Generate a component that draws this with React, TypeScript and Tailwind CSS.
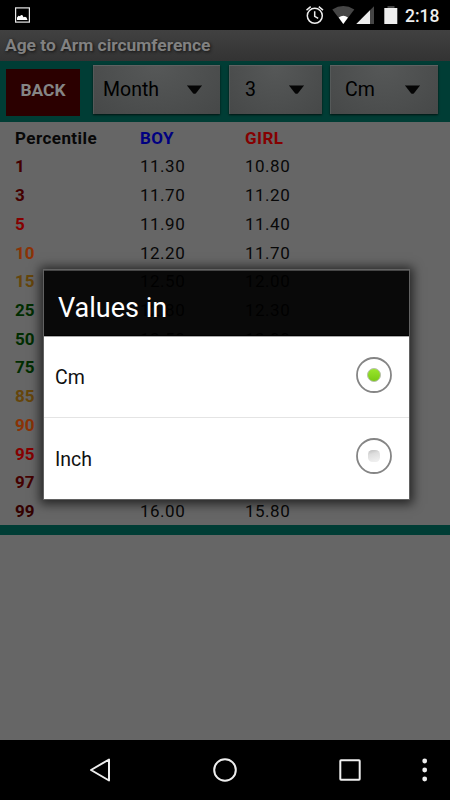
import React from "react";

type Row = { p: string; boy: string; girl: string; color: string };

const rows: Row[] = [
  { p: "1", boy: "11.30", girl: "10.80", color: "text-[#440000]" },
  { p: "3", boy: "11.70", girl: "11.20", color: "text-[#440000]" },
  { p: "5", boy: "11.90", girl: "11.40", color: "text-[#850000]" },
  { p: "10", boy: "12.20", girl: "11.70", color: "text-[#8a3205]" },
  { p: "15", boy: "12.50", girl: "12.00", color: "text-[#65450b]" },
  { p: "25", boy: "12.80", girl: "12.30", color: "text-[#002d00]" },
  { p: "50", boy: "13.50", girl: "13.00", color: "text-[#002d00]" },
  { p: "75", boy: "14.20", girl: "13.80", color: "text-[#002d00]" },
  { p: "85", boy: "14.60", girl: "14.20", color: "text-[#65450b]" },
  { p: "90", boy: "14.90", girl: "14.50", color: "text-[#8a3205]" },
  { p: "95", boy: "15.30", girl: "15.00", color: "text-[#850000]" },
  { p: "97", boy: "15.60", girl: "15.30", color: "text-[#440000]" },
  { p: "99", boy: "16.00", girl: "15.80", color: "text-[#330000]" },
];

function StatusBar() {
  return (
    <div className="flex h-[30px] items-center bg-black">
      <svg className="ml-[15px]" width="15" height="16" viewBox="0 0 15 16">
        <rect x=".6" y=".9" width="13.8" height="14.2" fill="none" stroke="#e8e8e8" strokeWidth="1.2" />
        <path d="M2 13V10.5l1.5-1.8 1.5.6 1-1.3 1.5.3 1 2 1.5-.6 1.5.8 1 2.5z" fill="#fff" />
      </svg>
      <svg className="ml-auto" width="100" height="30" viewBox="0 0 100 30">
        <g fill="none" stroke="#eee" strokeWidth="1.5">
          <circle cx="14.8" cy="15.8" r="7.5" />
          <path d="M14.7 11.3v5l3.5 2M6.5 10.2l4.2-3.5M23 10.2l-4.2-3.5" />
        </g>
        <path d="M32.3 9.4Q43.3 2.6 54.3 9.4L43.3 24z" fill="#464646" />
        <path d="M38.7 17.6Q43.3 14 48 17.6L43.3 24z" fill="#fff" />
        <path d="M56.3 24L74 6.3V24z" fill="#464646" />
        <path d="M56.3 24L70 10.3V24z" fill="#eee" />
        <path d="M87.5 6h7v4h-7z" fill="#464646" />
        <path d="M84.3 8h13v16h-13z" fill="#eee" />
      </svg>
      <span className="ml-[5px] w-[45px] pt-px text-[17.5px] font-medium leading-[30px] text-[#eee]">2:18</span>
    </div>
  );
}

function Spinner({ label, className }: { label: string; className: string }) {
  return (
    <div className={`flex h-[49px] items-center justify-between bg-[radial-gradient(ellipse_at_top,#565858,#464848)] text-[19.5px] text-black shadow-[0_1px_2px_rgba(0,0,0,.7),inset_0_1px_0_#5e6262,inset_1px_0_0_#555959] ${className}`}>
      <span>{label}</span>
      <svg width="15" height="9" viewBox="0 0 15 9">
        <path d="M0 .5h15L9 8.2q-1.5 1.2-3 0z" fill="#050505" />
        <path d="M0 .5h15" stroke="#292a2a" />
      </svg>
    </div>
  );
}

function Radio({ checked }: { checked: boolean }) {
  return (
    <svg width="38" height="38" viewBox="0 0 38 38">
      <defs>
        <linearGradient id="green" x2="0" y2="1">
          <stop stopColor="#9be72d" />
          <stop offset="1" stopColor="#79c914" />
        </linearGradient>
        <linearGradient id="off" x2=".3" y2="1">
          <stop stopColor="#bbb" />
          <stop offset=".4" stopColor="#ddd" />
          <stop offset="1" stopColor="#eee" />
        </linearGradient>
      </defs>
      <circle cx="19" cy="19" r="17" fill="#fff" stroke="#858585" strokeWidth="1.8" />
      {checked ? (
        <circle cx="19" cy="19" r="6.5" fill="url(#green)" stroke="#b9bfb0" strokeWidth="1" />
      ) : (
        <rect x="13" y="13" width="12" height="12" rx="4.5" fill="url(#off)" />
      )}
    </svg>
  );
}

function Dialog() {
  return (
    <div className="absolute left-[43px] top-[269px] w-[367px] border border-[#626262] shadow-[0_1px_10px_3px_rgba(0,0,0,.65)]">
      <div className="h-[66px] border-b border-t border-b-black border-t-[#454545] bg-black/91 pl-[14px] text-[27px] leading-[74px] text-white">
        Values in
      </div>
      <div className="bg-white text-[19.5px] text-[#101010]">
        <div className="flex h-[81px] items-center justify-between border-t border-[#aaa] pl-[11px] pr-[16px]">
          <span className="pt-[2px]">Cm</span>
          <div className="pb-[5px]"><Radio checked /></div>
        </div>
        <div className="flex h-[82px] items-center justify-between border-t border-[#e4e4e4] pl-[11px] pr-[16px]">
          <span className="pt-[2px]">Inch</span>
          <div className="pb-[6px]"><Radio checked={false} /></div>
        </div>
      </div>
    </div>
  );
}

export default function App() {
  return (
    <div className="relative flex h-[800px] w-[450px] flex-col overflow-hidden bg-[#666] font-[Roboto,sans-serif]">
      <StatusBar />
      <header className="h-[31px] bg-linear-to-b from-[#414141] to-[#333] pl-[5px] text-[17.4px] font-bold leading-[31px] text-[#818181] [text-shadow:1px_1px_3px_#111]">
        Age to Arm circumference
      </header>
      <div className="flex h-[61px] items-start bg-[#003d35] pt-[4px]">
        <div className="ml-[6px] mt-[4px] flex h-[47px] w-[74px] items-center justify-center bg-[#2b0000] pb-[4px] text-[17.4px] font-bold text-[#858585]">
          BACK
        </div>
        <Spinner label="Month" className="ml-[13px] w-[127px] pl-[10px] pr-[18px]" />
        <Spinner label="3" className="ml-[9px] w-[93px] pl-[16px] pr-[18px]" />
        <Spinner label="Cm" className="ml-[8px] w-[108px] pl-[15px] pr-[18px]" />
      </div>
      <div className="h-[403px] text-[17px] leading-[28.75px] text-[#080808]">
        <div className="grid h-[30.4px] grid-cols-[125px_105px_1fr] pl-[15px] pt-[1.5px] font-bold tracking-[.45px]">
          <span>Percentile</span>
          <span className="text-[#000080]">BOY</span>
          <span className="text-[#850000]">GIRL</span>
        </div>
        {rows.map((r) => (
          <div key={r.p} className="grid h-[28.72px] grid-cols-[125px_105px_1fr] pl-[15px]">
            <span className={`font-bold ${r.color}`}>{r.p}</span>
            <span className="tracking-[.5px]">{r.boy}</span>
            <span className="tracking-[.5px]">{r.girl}</span>
          </div>
        ))}
      </div>
      <div className="h-[10px] bg-[#003d35]" />
      <nav className="mt-auto h-[60px] bg-black">
        <svg width="450" height="60" viewBox="0 0 450 60">
          <g fill="none" stroke="#eee" strokeWidth="2">
            <path d="M91 30L109 19.5v21z" strokeLinejoin="round" />
            <circle cx="225" cy="30" r="10.8" />
            <rect x="340.3" y="20.3" width="19.4" height="19.4" rx=".7" />
          </g>
          <g fill="#eee">
            <circle cx="424.7" cy="21" r="2.4" />
            <circle cx="424.7" cy="30" r="2.4" />
            <circle cx="424.7" cy="39" r="2.4" />
          </g>
        </svg>
      </nav>
      <Dialog />
    </div>
  );
}
